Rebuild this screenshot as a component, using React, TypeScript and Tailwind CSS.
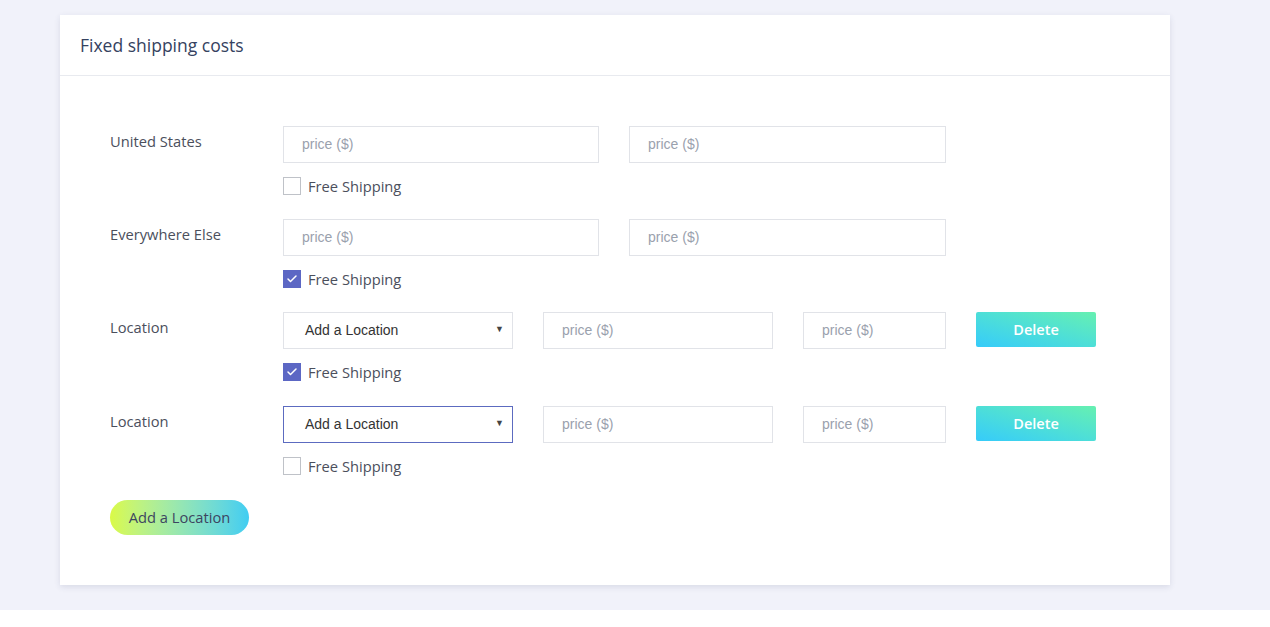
import { Check } from 'lucide-react';

const poppins = { fontFamily: '"Open Sans", "Noto Sans", sans-serif' };

function PriceInput({ width }: { width: string }) {
  return (
    <input
      type="text"
      placeholder="price ($)"
      className={`${width} h-[37px] border border-[#e1e3e8] bg-white px-[18px] pb-[1px] text-[14px] text-[#555] placeholder:text-[#9aa1ad] outline-none font-['Liberation_Sans',sans-serif]`}
    />
  );
}

function LocationSelect({ focused }: { focused?: boolean }) {
  return (
    <div
      className={`relative w-[230px] h-[37px] bg-white flex items-center pl-[21px] text-[14px] text-[#333] font-['Liberation_Sans',sans-serif] border ${
        focused ? 'border-[#5c6bc0]' : 'border-[#e1e3e8]'
      }`}
    >
      Add a Location
      <span className="absolute right-[8px] top-[10px] text-[9px] text-[#444]">▼</span>
    </div>
  );
}

function FreeShipping({ checked }: { checked?: boolean }) {
  return (
    <label className="mt-[14px] flex items-center h-[18px] gap-[7px] text-[14.7px] text-[#4b4f5c]">
      {checked ? (
        <span className="w-[18px] h-[18px] bg-[#5c67c4] flex items-center justify-center">
          <Check className="w-[12px] h-[12px] text-white" strokeWidth={3} />
        </span>
      ) : (
        <span className="w-[18px] h-[18px] border border-[#bfc2c8] bg-white" />
      )}
      Free Shipping
    </label>
  );
}

function DeleteButton() {
  return (
    <button className="w-[120px] h-[35px] rounded-[2px] bg-gradient-to-tr from-[#36cbfa] to-[#66f0b0] text-white text-[14.5px] font-semibold">
      Delete
    </button>
  );
}

function Row({
  label,
  children,
  checked,
  gap = 'mb-[24px]',
}: {
  label: string;
  children: React.ReactNode;
  checked?: boolean;
  gap?: string;
}) {
  return (
    <div className={`flex ${gap}`}>
      <div className="w-[173px] pt-[4px] text-[14.7px] text-[#4b4f5c]">{label}</div>
      <div className="flex flex-col">
        <div className="flex gap-[30px]">{children}</div>
        <FreeShipping checked={checked} />
      </div>
    </div>
  );
}

export default function App() {
  return (
    <div style={poppins} className="w-[1270px] h-[627px] bg-white">
      <div className="h-[610px] bg-[#f1f2fa] pt-[15px] pl-[60px]">
        <div className="w-[1110px] h-[570px] bg-white shadow-[0_2px_6px_rgba(40,50,90,0.12)]">
          <div className="h-[61px] border-b border-[#e8eaef] flex items-center px-[20px] text-[17.5px] text-[#354260]">
            Fixed shipping costs
          </div>
          <div className="pt-[50px] pl-[50px]">
            <Row label="United States">
              <PriceInput width="w-[316px]" />
              <PriceInput width="w-[317px]" />
            </Row>
            <Row label="Everywhere Else" checked>
              <PriceInput width="w-[316px]" />
              <PriceInput width="w-[317px]" />
            </Row>
            <Row label="Location" checked gap="mb-[25px]">
              <LocationSelect />
              <PriceInput width="w-[230px]" />
              <PriceInput width="w-[143px]" />
              <DeleteButton />
            </Row>
            <Row label="Location" gap="mb-[25px]">
              <LocationSelect focused />
              <PriceInput width="w-[230px]" />
              <PriceInput width="w-[143px]" />
              <DeleteButton />
            </Row>
            <button className="w-[139px] h-[35px] rounded-full bg-gradient-to-r from-[#dafa44] to-[#3fcdf2] text-[14.7px] text-[#3c4560]">
              Add a Location
            </button>
          </div>
        </div>
      </div>
    </div>
  );
}
